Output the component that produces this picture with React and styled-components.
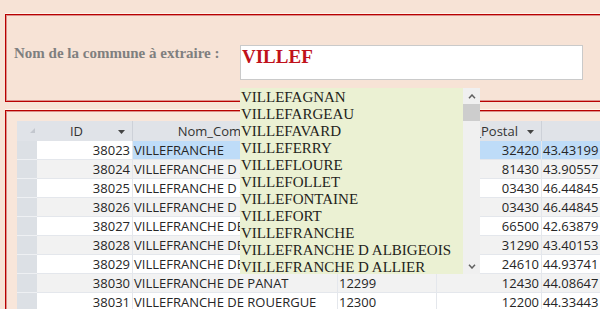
import React from 'react';
import styled, { createGlobalStyle } from 'styled-components';

const Global = createGlobalStyle`
  html, body { margin: 0; padding: 0; background: #F7E3D6; overflow: hidden; }
  #root { width: 600px; height: 309px; overflow: hidden; }
`;

const Page = styled.div`
  width: 600px;
  height: 309px;
  overflow: hidden;
  box-sizing: border-box;
  padding: 14px 0 0 5px;
  background: #F7E3D6;
`;

const Panel = styled.section`
  width: 760px;
  box-sizing: border-box;
  border: 1px solid #B80000;
  box-shadow: inset 0 0 0 1px #DC8F8A, 0 -1px 0 #FFF3EA;
`;

const SearchPanel = styled(Panel)`
  height: 88px;
  display: flex;
  align-items: flex-start;
  padding: 30px 0 0 8px;
  position: relative;
  z-index: 2;
`;

const Label = styled.div`
  width: 226px;
  flex: none;
  font-family: "Liberation Serif", "Times New Roman", serif;
  font-weight: 700;
  font-size: 15px;
  line-height: 17px;
  color: #7F7F7F;
`;

const TextBox = styled.div`
  position: relative;
  width: 343px;
  height: 35px;
  box-sizing: border-box;
  border: 1px solid #CACACA;
  background: #FFFFFF;
  font-family: "Liberation Serif", "Times New Roman", serif;
  font-weight: 700;
  font-size: 19px;
  line-height: 22px;
  color: #C0121B;
  padding: 0 1px;
`;

const Dropdown = styled.div`
  position: absolute;
  top: calc(100% + 9px);
  left: -1px;
  width: 240px;
  height: 186px;
  display: flex;
  z-index: 5;
`;

const List = styled.ul`
  flex: 1;
  margin: 0;
  padding: 1px 0 0 1px;
  list-style: none;
  background: #EBF1D3;
  overflow: hidden;
  font-family: "Liberation Serif", "Times New Roman", serif;
  font-weight: 400;
  font-size: 15px;
  line-height: 17px;
  color: #23231A;
`;

const Item = styled.li`
  white-space: nowrap;
  height: 17px;
`;

const ScrollBar = styled.div`
  width: 17px;
  flex: none;
  background: #F0F0F0;
  display: flex;
  flex-direction: column;
`;

const ScrollButton = styled.div`
  height: 16px;
  display: flex;
  align-items: center;
  justify-content: center;
`;

const Thumb = styled.div`
  height: 17px;
  background: #CDCDCD;
`;

const Spacer = styled.div`
  flex: 1;
`;

const TablePanel = styled(Panel)`
  margin-top: 8px;
  height: 240px;
  padding: 10px 0 0 11px;
  background: #F8E6DA;
`;

const Sheet = styled.div`
  display: flex;
  flex-direction: column;
  font-family: "Open Sans", "Segoe UI", sans-serif;
  font-size: 13px;
  color: #262626;
`;

const HeaderRow = styled.div`
  display: flex;
  height: 20px;
  background: #E0E3E8;
`;

const HeaderCell = styled.div`
  position: relative;
  flex: none;
  width: ${p => p.$w}px;
  box-sizing: border-box;
  display: flex;
  align-items: center;
  justify-content: center;
  padding: 0 16px 0 ${p => p.$pl || 0}px;
  border-right: 1px solid #CDD1D8;
  line-height: 20px;
  color: #333;
  white-space: nowrap;
  overflow: hidden;
`;

const SortArrow = styled.svg`
  position: absolute;
  right: 7px;
  top: 9px;
`;

const Corner = styled.svg`
  position: absolute;
  left: 13px;
  top: 7px;
`;

const Row = styled.div`
  display: flex;
  height: 19px;
`;

const Selector = styled.div`
  flex: none;
  width: 20px;
  box-sizing: border-box;
  background: #DCE0E5;
  border-bottom: 1px solid #EEF0F3;
`;

const Cell = styled.div`
  flex: none;
  width: ${p => p.$w}px;
  box-sizing: border-box;
  background: ${p => p.$bg};
  text-align: ${p => p.$align};
  padding: ${p => (p.$align === 'right' ? '0 2px 0 0' : '0 0 0 1px')};
  border-right: 1px solid #E4E7EC;
  border-bottom: 1px solid #E4E7EC;
  line-height: 18px;
  white-space: nowrap;
  overflow: hidden;
`;

const cols = [
  { key: 'id', w: 96, align: 'right' },
  { key: 'nom', w: 205, align: 'left' },
  { key: 'insee', w: 99, align: 'left' },
  { key: 'cp', w: 105, align: 'right' },
  { key: 'lat', w: 240, align: 'left' },
];

const data = [
  ['38023', 'VILLEFRANCHE', '32467', '32420', '43.43199'],
  ['38024', 'VILLEFRANCHE D ALBIGEOIS', '81314', '81430', '43.90557'],
  ['38025', 'VILLEFRANCHE D ALLIER', '03315', '03430', '46.44845'],
  ['38026', 'VILLEFRANCHE D ALLIER', '03316', '03430', '46.44845'],
  ['38027', 'VILLEFRANCHE DE CONFLENT', '66223', '66500', '42.63879'],
  ['38028', 'VILLEFRANCHE DE LAURAGAIS', '31582', '31290', '43.40153'],
  ['38029', 'VILLEFRANCHE DE LONCHAT', '24584', '24610', '44.93741'],
  ['38030', 'VILLEFRANCHE DE PANAT', '12299', '12430', '44.08647'],
  ['38031', 'VILLEFRANCHE DE ROUERGUE', '12300', '12200', '44.33443'],
];

const suggestions = [
  'VILLEFAGNAN',
  'VILLEFARGEAU',
  'VILLEFAVARD',
  'VILLEFERRY',
  'VILLEFLOURE',
  'VILLEFOLLET',
  'VILLEFONTAINE',
  'VILLEFORT',
  'VILLEFRANCHE',
  'VILLEFRANCHE D ALBIGEOIS',
  'VILLEFRANCHE D ALLIER',
];

const Chevron = ({ up }) => (
  <svg width="8" height="5" viewBox="0 0 8 5">
    <polyline
      points={up ? '1,4.2 4,1 7,4.2' : '1,0.8 4,4 7,0.8'}
      fill="none"
      stroke="#606060"
      strokeWidth="1.5"
    />
  </svg>
);

const Arrow = () => (
  <SortArrow width="7" height="4" viewBox="0 0 7 4">
    <polygon points="0,0 7,0 3.5,4" fill="#444" />
  </SortArrow>
);

function cellBg(rowIndex, colKey) {
  if (rowIndex === 0) return colKey === 'id' ? '#FFFFFF' : '#BEDCF8';
  return rowIndex % 2 === 1 ? '#F2F2F2' : '#FFFFFF';
}

export default function App() {
  return (
    <>
      <Global />
      <Page>
        <SearchPanel>
          <Label>Nom de la commune à extraire :</Label>
          <TextBox role="textbox">
            VILLEF
            <Dropdown>
              <List>
                {suggestions.map(s => (
                  <Item key={s}>{s}</Item>
                ))}
              </List>
              <ScrollBar>
                <ScrollButton><Chevron up /></ScrollButton>
                <Thumb />
                <Spacer />
                <ScrollButton><Chevron /></ScrollButton>
              </ScrollBar>
            </Dropdown>
          </TextBox>
        </SearchPanel>
        <TablePanel>
          <Sheet>
            <HeaderRow>
              <HeaderCell $w={116} $pl={20}>
                <Corner width="5" height="5" viewBox="0 0 5 5">
                  <polygon points="5,0 5,5 0,5" fill="#C3C7CE" />
                </Corner>
                ID<Arrow />
              </HeaderCell>
              <HeaderCell $w={205}>Nom_Commune<Arrow /></HeaderCell>
              <HeaderCell $w={99}>Code_INSEE<Arrow /></HeaderCell>
              <HeaderCell $w={105}>Code_Postal<Arrow /></HeaderCell>
              <HeaderCell $w={240}>Latitude<Arrow /></HeaderCell>
            </HeaderRow>
            {data.map((r, i) => (
              <Row key={r[0]}>
                <Selector />
                {cols.map((c, j) => (
                  <Cell key={c.key} $w={c.w} $align={c.align} $bg={cellBg(i, c.key)}>
                    {r[j]}
                  </Cell>
                ))}
              </Row>
            ))}
          </Sheet>
        </TablePanel>
      </Page>
    </>
  );
}
